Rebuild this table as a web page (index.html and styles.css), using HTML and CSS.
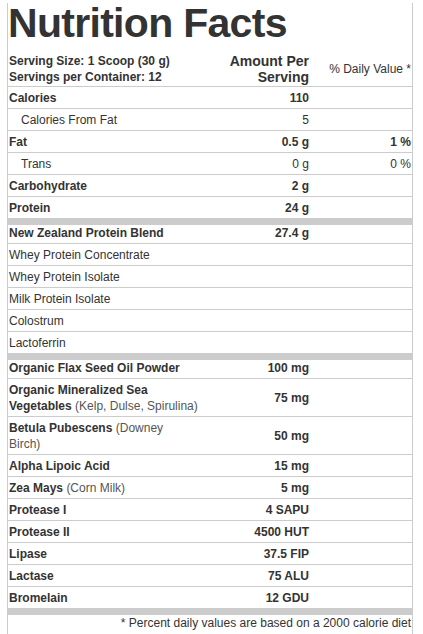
FILE: index.html
```html
<!DOCTYPE html>
<html lang="en">
<head>
    <meta charset="UTF-8">
    <meta name="viewport" content="width=device-width, initial-scale=1.0">
    <title>Nutrition Facts</title>
    <link rel="stylesheet" href="styles.css">
</head>
<body>

<div class="facts-panel">
    <h1 class="facts-title">Nutrition Facts</h1>

    <table class="facts">
        <colgroup>
            <col class="col-name">
            <col class="col-amount">
            <col class="col-dv">
        </colgroup>
        <thead>
            <tr>
                <th class="name">Serving Size: 1 Scoop (30 g)<br>Servings per Container: 12</th>
                <th class="amount">Amount Per<br>Serving</th>
                <th class="dv">% Daily Value *</th>
            </tr>
        </thead>
        <tbody>
            <!-- 主要營養素 -->
            <tr class="bold">
                <td class="name">Calories</td>
                <td class="amount">110</td>
                <td class="dv"></td>
            </tr>
            <tr class="sub">
                <td class="name">Calories From Fat</td>
                <td class="amount">5</td>
                <td class="dv"></td>
            </tr>
            <tr class="bold">
                <td class="name">Fat</td>
                <td class="amount">0.5 g</td>
                <td class="dv">1 %</td>
            </tr>
            <tr class="sub">
                <td class="name">Trans</td>
                <td class="amount">0 g</td>
                <td class="dv">0 %</td>
            </tr>
            <tr class="bold">
                <td class="name">Carbohydrate</td>
                <td class="amount">2 g</td>
                <td class="dv"></td>
            </tr>
            <tr class="bold">
                <td class="name">Protein</td>
                <td class="amount">24 g</td>
                <td class="dv"></td>
            </tr>

            <!-- 蛋白質混合 -->
            <tr class="bold group">
                <td class="name">New Zealand Protein Blend</td>
                <td class="amount">27.4 g</td>
                <td class="dv"></td>
            </tr>
            <tr>
                <td class="name">Whey Protein Concentrate</td>
                <td class="amount"></td>
                <td class="dv"></td>
            </tr>
            <tr>
                <td class="name">Whey Protein Isolate</td>
                <td class="amount"></td>
                <td class="dv"></td>
            </tr>
            <tr>
                <td class="name">Milk Protein Isolate</td>
                <td class="amount"></td>
                <td class="dv"></td>
            </tr>
            <tr>
                <td class="name">Colostrum</td>
                <td class="amount"></td>
                <td class="dv"></td>
            </tr>
            <tr>
                <td class="name">Lactoferrin</td>
                <td class="amount"></td>
                <td class="dv"></td>
            </tr>

            <!-- 其他成分 -->
            <tr class="bold group">
                <td class="name">Organic Flax Seed Oil Powder</td>
                <td class="amount">100 mg</td>
                <td class="dv"></td>
            </tr>
            <tr class="bold">
                <td class="name">Organic Mineralized Sea<br>Vegetables <span class="note">(Kelp, Dulse, Spirulina)</span></td>
                <td class="amount">75 mg</td>
                <td class="dv"></td>
            </tr>
            <tr class="bold">
                <td class="name">Betula Pubescens <span class="note">(Downey<br>Birch)</span></td>
                <td class="amount">50 mg</td>
                <td class="dv"></td>
            </tr>
            <tr class="bold">
                <td class="name">Alpha Lipoic Acid</td>
                <td class="amount">15 mg</td>
                <td class="dv"></td>
            </tr>
            <tr class="bold">
                <td class="name">Zea Mays <span class="note">(Corn Milk)</span></td>
                <td class="amount">5 mg</td>
                <td class="dv"></td>
            </tr>
            <tr class="bold">
                <td class="name">Protease I</td>
                <td class="amount">4 SAPU</td>
                <td class="dv"></td>
            </tr>
            <tr class="bold">
                <td class="name">Protease II</td>
                <td class="amount">4500 HUT</td>
                <td class="dv"></td>
            </tr>
            <tr class="bold">
                <td class="name">Lipase</td>
                <td class="amount">37.5 FIP</td>
                <td class="dv"></td>
            </tr>
            <tr class="bold">
                <td class="name">Lactase</td>
                <td class="amount">75 ALU</td>
                <td class="dv"></td>
            </tr>
            <tr class="bold">
                <td class="name">Bromelain</td>
                <td class="amount">12 GDU</td>
                <td class="dv"></td>
            </tr>
        </tbody>
        <tfoot>
            <tr class="group">
                <td class="footnote" colspan="3">* Percent daily values are based on a 2000 calorie diet</td>
            </tr>
        </tfoot>
    </table>
</div>

</body>
</html>
```

FILE: styles.css
```css
body {
    font-family: "Liberation Sans", Arial, sans-serif;
    color: #333;
    background-color: #fff;
    margin: 0;
    padding: 0;
}

.facts-panel {
    width: 406px;
    min-height: 100vh;
    margin-left: 7px;
    box-sizing: border-box;
    border-left: 1px solid #ccc;
    border-right: 1px solid #ccc;
}

.facts-title {
    margin: 3px 0 0 0;
    font-size: 41px;
    line-height: 41px;
    font-weight: bold;
    letter-spacing: -0.7px;
    color: #333;
}

/* 營養成分表 */
.facts {
    width: 100%;
    border-collapse: collapse;
    font-size: 12px;
    line-height: 16px;
}
.col-name {
    width: 50%;
}
.col-amount, .col-dv {
    width: 25%;
}

.facts th {
    padding: 9px 1px 1px 1px;
    border-bottom: 1px solid #ccc;
    vertical-align: middle;
}
.facts th.name {
    text-align: left;
    font-size: 12px;
}
.facts th.amount {
    text-align: right;
    font-size: 14px;
    padding-right: 2px;
}
.facts th.dv {
    text-align: right;
    font-weight: normal;
}

.facts td {
    padding: 3px 1px 2px 1px;
    border-bottom: 1px solid #ccc;
    vertical-align: middle;
}
.facts td.amount {
    text-align: right;
    padding-right: 2px;
}
.facts td.dv {
    text-align: right;
}

.facts tr.bold td {
    font-weight: bold;
}
.facts tr.sub td.name {
    padding-left: 13px;
}

/* 粗分隔線 */
.facts tr.group td {
    border-top: 7px solid #ccc;
    padding-top: 0;
}

.facts .note {
    font-weight: normal;
    color: #555;
}

.facts td.footnote {
    text-align: right;
    border-bottom: none;
}
```
